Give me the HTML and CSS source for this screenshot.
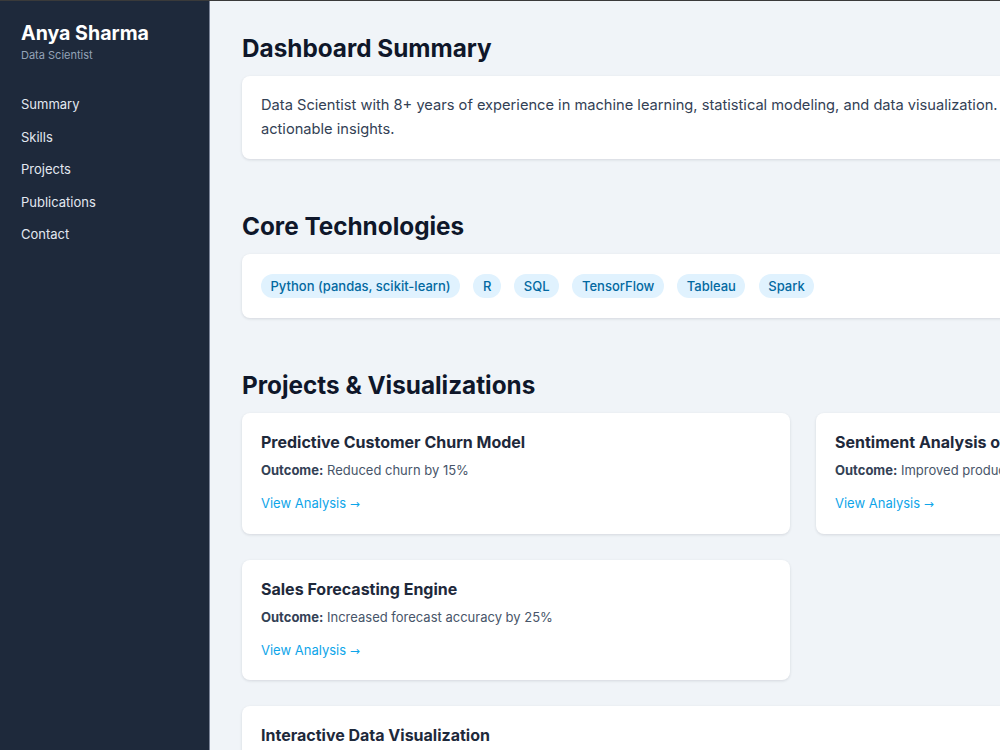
FILE: index.html
```html
<!DOCTYPE html>
<html lang="en">
<head>
<meta charset="UTF-8">
<meta name="viewport" content="width=device-width, initial-scale=1.0">
<title>Anya Sharma - Dashboard</title>
<link rel="stylesheet" href="styles.css">
</head>
<body>

<aside class="sidebar">
  <div class="name">Anya Sharma</div>
  <div class="role">Data Scientist</div>
  <nav class="nav">
    <a href="#summary">Summary</a>
    <a href="#skills">Skills</a>
    <a href="#projects">Projects</a>
    <a href="#publications">Publications</a>
    <a href="#contact">Contact</a>
  </nav>
</aside>

<main class="main">
  <div class="content">
    <section class="section" id="summary">
      <h2>Dashboard Summary</h2>
      <div class="card summary">
        <p>Data Scientist with 8+ years of experience in machine learning, statistical modeling, and data visualization. Skilled at translating complex datasets into actionable insights.</p>
      </div>
    </section>

    <section class="section" id="skills">
      <h2>Core Technologies</h2>
      <div class="card tags">
        <span class="tag">Python (pandas, scikit-learn)</span>
        <span class="tag">R</span>
        <span class="tag">SQL</span>
        <span class="tag">TensorFlow</span>
        <span class="tag">Tableau</span>
        <span class="tag">Spark</span>
      </div>
    </section>

    <section class="section" id="projects">
      <h2>Projects &amp; Visualizations</h2>
      <div class="project-grid">
        <div class="card project">
          <h3>Predictive Customer Churn Model</h3>
          <p><strong>Outcome:</strong> Reduced churn by 15%</p>
          <a href="#">View Analysis <span class="arrow">&rarr;</span></a>
        </div>
        <div class="card project">
          <h3>Sentiment Analysis of Product Reviews</h3>
          <p><strong>Outcome:</strong> Improved product ratings by 10%</p>
          <a href="#">View Analysis <span class="arrow">&rarr;</span></a>
        </div>
        <div class="card project">
          <h3>Sales Forecasting Engine</h3>
          <p><strong>Outcome:</strong> Increased forecast accuracy by 25%</p>
          <a href="#">View Analysis <span class="arrow">&rarr;</span></a>
        </div>
        <div class="card project wide">
          <h3>Interactive Data Visualization</h3>
          <p><strong>Outcome:</strong> Enabled self-serve reporting for 200+ users</p>
          <a href="#">View Dashboard <span class="arrow">&rarr;</span></a>
        </div>
      </div>
    </section>
  </div>
</main>

</body>
</html>
```

FILE: styles.css
```css
html, body {
  margin: 0;
  overflow: hidden;
}
body {
  font-family: Inter, "Noto Sans", sans-serif;
  background-color: #f0f4f8;
  border-top: 1px solid #3a3a3a;
  display: flex;
  min-height: 100vh;
}
.sidebar {
  flex: 0 0 210px;
  background-color: #1e293b;
  border-right: 1px solid #7c8599;
  padding: 20px 21px;
  box-sizing: border-box;
  min-height: 100vh;
}
.name {
  color: #fff;
  font-size: 19.6px;
  font-weight: 700;
  line-height: 24px;
}
.role {
  color: #94a3b8;
  font-size: 11px;
  margin-top: 3px;
}
.nav {
  margin-top: 26px;
  display: flex;
  flex-direction: column;
}
.nav a {
  color: #e2e8f0;
  text-decoration: none;
  font-size: 13px;
  line-height: 20.5px;
  padding: 6px 0;
}
.main {
  flex: 0 0 auto;
  padding: 33px 32px;
}
.content {
  width: 1122px;
}
.section {
  margin-bottom: 53px;
}
h2 {
  margin: 0 0 13px;
  font-size: 24.3px;
  line-height: 29px;
  font-weight: 700;
  color: #0f172a;
}
.card {
  background-color: #fff;
  border-radius: 8px;
  box-shadow: 0 1px 3px rgba(15, 23, 42, 0.12);
}
.summary {
  padding: 17px 19px 18px;
}
.summary p {
  margin: 0;
  font-size: 14.65px;
  line-height: 24px;
  color: #334155;
}
.tags {
  padding: 20px 19px;
  display: flex;
  flex-wrap: wrap;
  gap: 13.4px;
}
.tag {
  background-color: #e0f2fe;
  color: #0369a1;
  font-size: 13px;
  font-weight: 500;
  line-height: 16px;
  padding: 4px 9.5px;
  border-radius: 999px;
}
.project-grid {
  display: grid;
  grid-template-columns: 1fr 1fr;
  gap: 26px;
}
.project {
  padding: 19px 19px 21.5px;
}
.project.wide {
  grid-column: 1 / -1;
}
.project h3 {
  margin: 0 0 9px;
  font-size: 16px;
  line-height: 20px;
  font-weight: 700;
  color: #1e293b;
}
.project p {
  margin: 0 0 15px;
  font-size: 13px;
  line-height: 18px;
  color: #475569;
}
.project strong {
  color: #334155;
}
.project a {
  display: block;
  color: #0ea5e9;
  font-size: 13px;
  line-height: 18px;
  text-decoration: none;
}
.arrow {
  font-family: "DejaVu Sans", sans-serif;
  font-size: 12px;
  line-height: 0;
}
```
